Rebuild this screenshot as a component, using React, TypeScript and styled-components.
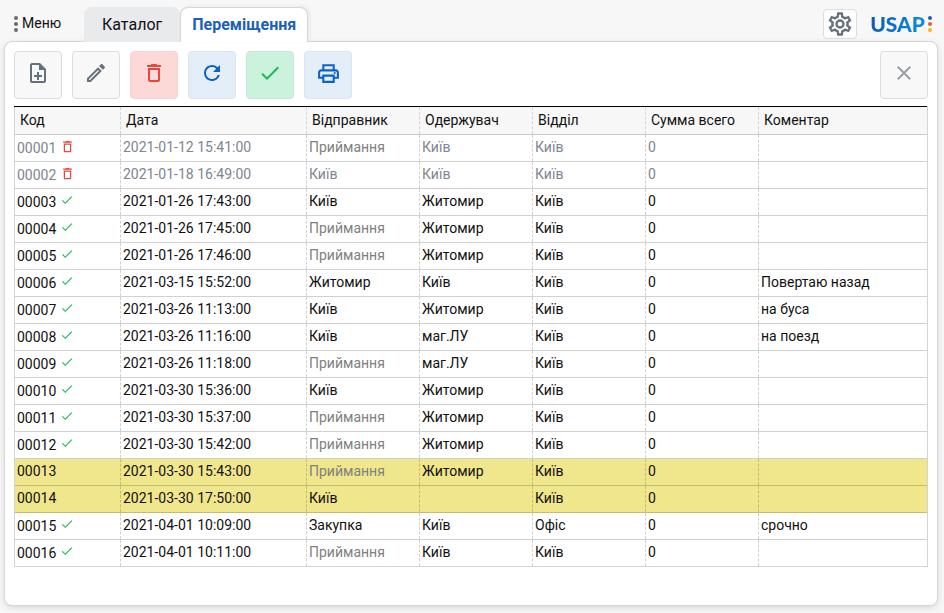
import React from "react";
import styled, { createGlobalStyle, css } from "styled-components";
import {
  MdOutlineNoteAdd,
  MdDeleteOutline,
  MdRefresh,
  MdCheck,
  MdOutlinePrint,
  MdClose,
  MdOutlineEdit,
} from "react-icons/md";

const GlobalStyle = createGlobalStyle`
  *, *::before, *::after { box-sizing: border-box; }
  body {
    margin: 0;
    background: #f7f7f8;
    color: #111;
    font-family: Roboto, "Liberation Sans", sans-serif;
    font-size: 14px;
  }
  button { font: inherit; color: inherit; cursor: pointer; }
`;

const Page = styled.div`
  display: flex;
  flex-direction: column;
  min-height: 100vh;
  padding: 7px 6px 7px 4px;
`;

const TopBar = styled.header`
  display: flex;
  align-items: flex-start;
`;

const MenuButton = styled.button`
  display: flex;
  align-items: center;
  gap: 4px;
  width: 80px;
  height: 32px;
  padding: 0 0 0 10px;
  border: 0;
  background: none;
`;

const Tabs = styled.nav`
  display: flex;
  position: relative;
  z-index: 1;
  margin-bottom: -1px;
`;

const Tab = styled.button<{ $active?: boolean }>`
  height: 35px;
  padding: 0 17px 2px;
  border: 1px solid #e9eaec;
  border-bottom: 0;
  border-radius: 8px 8px 0 0;
  background: #e9eaec;
  font-size: 16px;
  ${(p) =>
    p.$active &&
    css`
      padding: 0 11px 2px;
      border-color: #d3d6da;
      background: #fff;
      color: #1a5fb9;
      font-weight: 700;
      box-shadow: 2px -1px 4px rgba(0, 0, 0, 0.06);
    `}
`;

const Brand = styled.div`
  display: flex;
  align-items: center;
  gap: 13px;
  margin-left: auto;
  padding: 2px 0 0;
`;

const SettingsButton = styled.button`
  display: grid;
  place-items: center;
  width: 34px;
  height: 30px;
  padding: 0;
  border: 1px solid #dcdddf;
  border-radius: 4px;
  background: #fff;
  color: #66707b;
`;

const Logo = styled.a`
  display: flex;
  align-items: center;
  gap: 3px;
  padding-right: 6px;
  text-decoration: none;
`;

const LogoText = styled.span`
  font-family: Lato, sans-serif;
  font-size: 21px;
  font-weight: 900;
  line-height: 30px;
  color: transparent;
  background: linear-gradient(90deg, #0b5cb8, #0a8be6);
  background-clip: text;
`;

const Panel = styled.main`
  flex: 1;
  padding: 9px;
  border: 1px solid #d3d6da;
  border-radius: 8px;
  background: #fff;
  box-shadow: 0 2px 6px rgba(0, 0, 0, 0.12);
`;

const Toolbar = styled.div`
  display: flex;
  gap: 10px;
  margin-bottom: 7px;
`;

const tones = {
  plain: css`background: #f8f8f8; border-color: #dadcdf; color: #66707b;`,
  muted: css`background: #f8f8f8; border-color: #dadcdf; color: #9aa0a8; margin-left: auto;`,
  red: css`background: #fcd9d6; border-color: #f3d6d4; color: #e8473f;`,
  blue: css`background: #e4eef8; border-color: #dbe5ee; color: #0c63c4;`,
  green: css`background: #cbf2dc; border-color: #c9e6d6; color: #1db954;`,
};

const ToolButton = styled.button<{ $tone: keyof typeof tones }>`
  display: grid;
  place-items: center;
  width: 48px;
  height: 48px;
  padding: 0 0 4px;
  border: 1px solid;
  border-radius: 4px;
  ${(p) => tones[p.$tone]}
`;

const Table = styled.table`
  width: 100%;
  table-layout: fixed;
  border-collapse: collapse;
  border: 1px solid #d3d4d6;
  border-top: 1px solid #000;
`;

const Column = styled.col<{ $width?: number }>`
  width: ${(p) => (p.$width ? `${p.$width}px` : "auto")};
`;

const HeadCell = styled.th`
  height: 28px;
  padding: 0 5px 2px;
  border-right: 1px dashed #d3d4d6;
  background: #f7f7f7;
  font-weight: 400;
  text-align: left;
  &:last-child { border-right: 1px solid #d3d4d6; }
`;

const Row = styled.tr<{ $state: State }>`
  color: ${(p) => (p.$state === "deleted" ? "#7e8691" : "#111")};
  background: ${(p) => (p.$state === "draft" ? "#f0e68c" : "#fff")};
`;

const Cell = styled.td<{ $gray?: boolean; $flush?: boolean }>`
  height: 27px;
  padding: ${(p) => (p.$flush ? "0 2px" : "0 2px 2px")};
  border-top: 1px solid rgba(0, 0, 0, 0.18);
  border-right: 1px dashed rgba(0, 0, 0, 0.18);
  line-height: 18px;
  white-space: nowrap;
  ${(p) => p.$gray && css`color: #808080;`}
  &:last-child { border-right: 1px solid #d3d4d6; }
`;

const Code = styled.span`
  display: flex;
  align-items: center;
  gap: 4px;
`;

const StatusIcon = styled.span<{ $state: State }>`
  display: flex;
  padding-bottom: 4px;
  color: ${(p) => (p.$state === "deleted" ? "#e8473f" : "#27b562")};
`;

const DotsIcon = () => (
  <svg width="4" height="18" viewBox="0 0 4 18" fill="#6b6b6b" aria-hidden="true">
    <circle cx="2" cy="4" r="2" />
    <circle cx="2" cy="10" r="2" />
    <circle cx="2" cy="16" r="2" />
  </svg>
);

const LogoDots = () => (
  <svg width="4" height="16" viewBox="0 0 4 16" aria-hidden="true">
    <circle cx="2" cy="2" r="2" fill="#1f5fae" />
    <circle cx="2" cy="8" r="2" fill="#ec5a2b" />
    <circle cx="2" cy="14" r="2" fill="#f9b61a" />
  </svg>
);

const GearIcon = () => (
  <svg width="28" height="28" viewBox="0 0 24 24" fill="currentColor" aria-hidden="true">
    <path d="M12 8a4 4 0 0 1 4 4 4 4 0 0 1-4 4 4 4 0 0 1-4-4 4 4 0 0 1 4-4m0 2a2 2 0 0 0-2 2 2 2 0 0 0 2 2 2 2 0 0 0 2-2 2 2 0 0 0-2-2m-2 12c-.25 0-.46-.18-.5-.42l-.37-2.65c-.63-.25-1.17-.59-1.69-.99l-2.49 1.01c-.22.08-.49 0-.61-.22l-2-3.46a.493.493 0 0 1 .12-.64l2.11-1.66L4.5 12l.07-1-2.11-1.63a.493.493 0 0 1-.12-.64l2-3.46c.12-.22.39-.31.61-.22l2.49 1c.52-.39 1.06-.73 1.69-.98l.37-2.65c.04-.24.25-.42.5-.42h4c.25 0 .46.18.5.42l.37 2.65c.63.25 1.17.59 1.69.98l2.49-1c.22-.09.49 0 .61.22l2 3.46c.13.22.07.49-.12.64L19.43 11l.07 1-.07 1 2.11 1.63c.19.15.25.42.12.64l-2 3.46c-.12.22-.39.31-.61.22l-2.49-1c-.52.39-1.06.73-1.69.98l-.37 2.65c-.04.24-.25.42-.5.42h-4m1.25-18-.37 2.61c-1.2.25-2.26.89-3.03 1.78L5.44 7.35l-.75 1.3L6.8 10.2a5.55 5.55 0 0 0 0 3.6l-2.12 1.56.75 1.3 2.43-1.04c.77.88 1.82 1.52 3.01 1.76l.37 2.62h1.52l.37-2.61c1.19-.25 2.24-.89 3.01-1.77l2.43 1.04.75-1.3-2.12-1.55c.4-1.17.4-2.44 0-3.61l2.11-1.55-.75-1.3-2.41 1.04a5.42 5.42 0 0 0-3.03-1.77L12.75 4h-1.5Z" />
  </svg>
);

type State = "deleted" | "done" | "draft";
type Entry = [string, State, string, string, string, string, string?];

const ENTRIES: Entry[] = [
  ["00001", "deleted", "2021-01-12 15:41:00", "Приймання", "Київ", "Київ"],
  ["00002", "deleted", "2021-01-18 16:49:00", "Київ", "Київ", "Київ"],
  ["00003", "done", "2021-01-26 17:43:00", "Київ", "Житомир", "Київ"],
  ["00004", "done", "2021-01-26 17:45:00", "Приймання", "Житомир", "Київ"],
  ["00005", "done", "2021-01-26 17:46:00", "Приймання", "Житомир", "Київ"],
  ["00006", "done", "2021-03-15 15:52:00", "Житомир", "Київ", "Київ", "Повертаю назад"],
  ["00007", "done", "2021-03-26 11:13:00", "Київ", "Житомир", "Київ", "на буса"],
  ["00008", "done", "2021-03-26 11:16:00", "Київ", "маг.ЛУ", "Київ", "на поезд"],
  ["00009", "done", "2021-03-26 11:18:00", "Приймання", "маг.ЛУ", "Київ"],
  ["00010", "done", "2021-03-30 15:36:00", "Київ", "Житомир", "Київ"],
  ["00011", "done", "2021-03-30 15:37:00", "Приймання", "Житомир", "Київ"],
  ["00012", "done", "2021-03-30 15:42:00", "Приймання", "Житомир", "Київ"],
  ["00013", "draft", "2021-03-30 15:43:00", "Приймання", "Житомир", "Київ"],
  ["00014", "draft", "2021-03-30 17:50:00", "Київ", "", "Київ"],
  ["00015", "done", "2021-04-01 10:09:00", "Закупка", "Київ", "Офіс", "срочно"],
  ["00016", "done", "2021-04-01 10:11:00", "Приймання", "Київ", "Київ"],
];

const COLUMNS: { title: string; width?: number }[] = [
  { title: "Код", width: 106 },
  { title: "Дата", width: 186 },
  { title: "Відправник", width: 113 },
  { title: "Одержувач", width: 113 },
  { title: "Відділ", width: 113 },
  { title: "Сумма всего", width: 113 },
  { title: "Коментар" },
];

export default function App() {
  return (
    <>
      <GlobalStyle />
      <Page>
        <TopBar>
          <MenuButton type="button"><DotsIcon />Меню</MenuButton>
          <Tabs>
            <Tab type="button">Каталог</Tab>
            <Tab type="button" $active aria-current="page">Переміщення</Tab>
          </Tabs>
          <Brand>
            <SettingsButton type="button" aria-label="Налаштування"><GearIcon /></SettingsButton>
            <Logo href="#"><LogoText>USAP</LogoText><LogoDots /></Logo>
          </Brand>
        </TopBar>
        <Panel>
          <Toolbar>
            <ToolButton type="button" $tone="plain" aria-label="Створити"><MdOutlineNoteAdd size={24} /></ToolButton>
            <ToolButton type="button" $tone="plain" aria-label="Редагувати"><MdOutlineEdit size={24} /></ToolButton>
            <ToolButton type="button" $tone="red" aria-label="Видалити"><MdDeleteOutline size={24} /></ToolButton>
            <ToolButton type="button" $tone="blue" aria-label="Оновити"><MdRefresh size={24} /></ToolButton>
            <ToolButton type="button" $tone="green" aria-label="Провести"><MdCheck size={24} /></ToolButton>
            <ToolButton type="button" $tone="blue" aria-label="Друк"><MdOutlinePrint size={25} /></ToolButton>
            <ToolButton type="button" $tone="muted" aria-label="Закрити"><MdClose size={24} /></ToolButton>
          </Toolbar>
          <Table>
            <colgroup>
              {COLUMNS.map((c) => <Column key={c.title} $width={c.width} />)}
            </colgroup>
            <thead>
              <tr>{COLUMNS.map((c) => <HeadCell key={c.title} scope="col">{c.title}</HeadCell>)}</tr>
            </thead>
            <tbody>
              {ENTRIES.map(([code, state, date, from, to, dept, note]) => (
                <Row key={code} $state={state}>
                  <Cell $flush={state !== "draft"}>
                    <Code>
                      {code}
                      {state !== "draft" && (
                        <StatusIcon $state={state}>
                          {state === "deleted" ? <MdDeleteOutline size={15} /> : <MdCheck size={14} />}
                        </StatusIcon>
                      )}
                    </Code>
                  </Cell>
                  <Cell>{date}</Cell>
                  <Cell $gray={from === "Приймання"}>{from}</Cell>
                  <Cell>{to}</Cell>
                  <Cell>{dept}</Cell>
                  <Cell>0</Cell>
                  <Cell>{note}</Cell>
                </Row>
              ))}
            </tbody>
          </Table>
        </Panel>
      </Page>
    </>
  );
}
